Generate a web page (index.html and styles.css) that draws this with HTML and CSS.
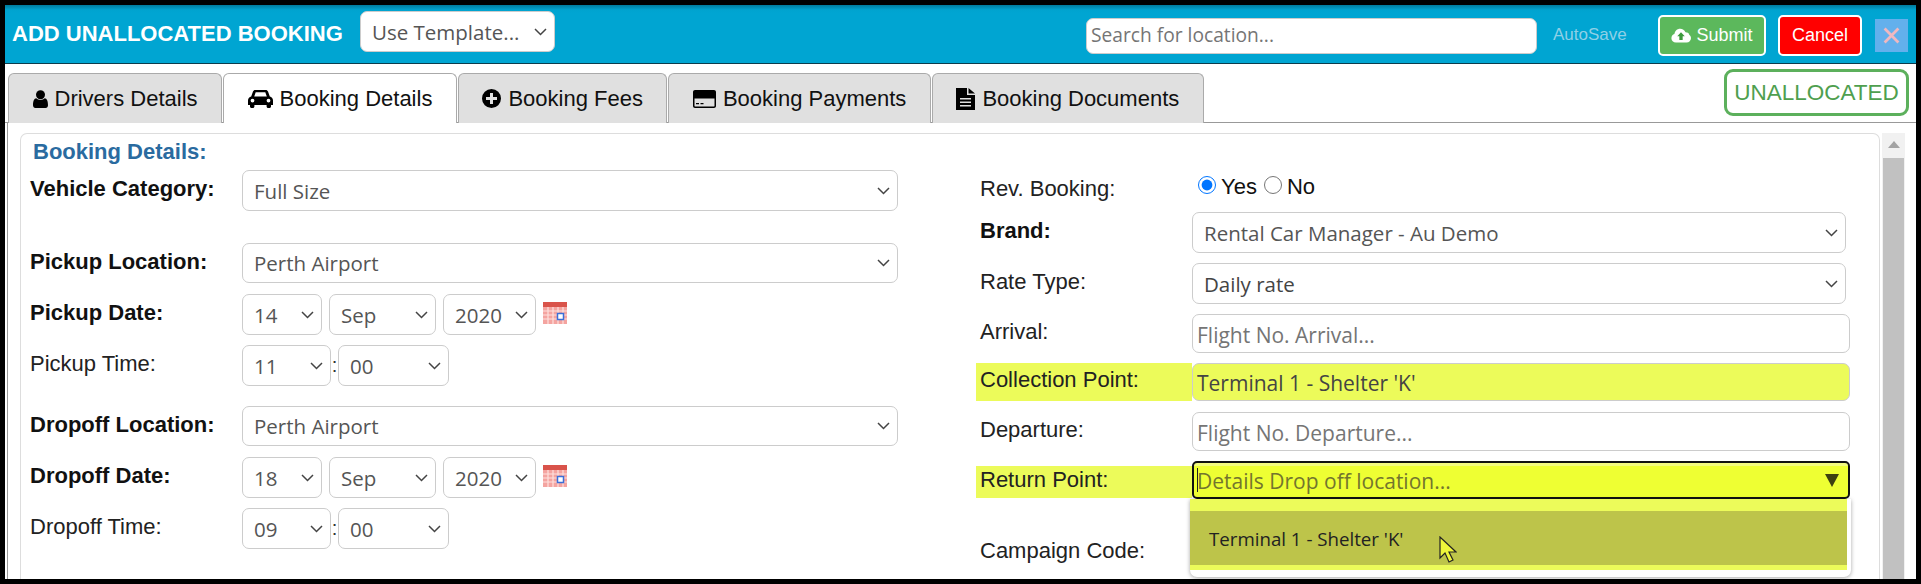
FILE: index.html
```html
<!DOCTYPE html>
<html lang="en">
<head>
<meta charset="utf-8">
<title>Add Unallocated Booking</title>
<link rel="stylesheet" href="styles.css">
</head>
<body>
<div class="frame">
  <header class="topbar">
    <h1 class="title">ADD UNALLOCATED BOOKING</h1>
    <select class="ctl tpl"><option>Use Template...</option></select>
    <input class="search" type="text" placeholder="Search for location...">
    <span class="autosave">AutoSave</span>
    <button class="btn submit" type="button">
      <svg class="cloud" viewBox="0 0 24 18"><path fill="#fff" d="M6 17.500C2.800 17.500.5 15.300.5 12.300c0-2.400 1.400-4.300 3.600-5C4.600 3.700 7.300 1 11 1c2.900 0 5.200 1.500 6.300 4 .9-.2 4.700.4 4.700 3.300 1.200.8 2 2.200 2 3.800 0 3-2.300 5.400-5.300 5.400z"/><path fill="#3d9a3d" d="M12 5l4.500 5H14v4.500h-4V10H7.500z"/></svg>
      Submit
    </button>
    <button class="btn cancel" type="button">Cancel</button>
    <button class="close" type="button" aria-label="Close">
      <svg viewBox="0 0 16 16"><path d="M1.500 1.500l13 13M14.500 1.500l-13 13" stroke="#f0b8c0" stroke-width="2.600" fill="none"/></svg>
    </button>
  </header>

  <nav class="tabbar">
    <a class="tab">
      <svg class="ico i-user" viewBox="0 0 15 18"><circle cx="7.500" cy="4.700" r="4.500"/><path d="M3.300 8.300c1 1 2.600 1.700 4.200 1.700s3.200-.7 4.200-1.700c2.200.2 3.300 3 3.300 7 0 1.600-1 2.700-2.400 2.700H2.400C1 18 0 16.900 0 15.300c0-4 1.100-6.800 3.300-7z"/></svg>
      Drivers Details</a>
    <a class="tab active">
      <svg class="ico i-car" viewBox="0 0 25 18"><path fill-rule="evenodd" d="M7.200 0h10.600c1 0 1.800.6 2.200 1.600L21.800 6.500c1.900.4 3.200 2 3.200 4V15h-2v1.500c0 .9-.7 1.500-1.600 1.500h-1.200c-.9 0-1.600-.6-1.600-1.500V15H6.400v1.500c0 .9-.7 1.500-1.600 1.500H3.600C2.700 18 2 17.400 2 16.500V15H0v-4.500c0-2 1.300-3.600 3.200-4L5 1.600C5.400.6 6.200 0 7.200 0zM7.700 2.300L6.200 6.400h12.600l-1.500-4.100zM4.500 8.700a1.900 1.900 0 1 0 0 3.800 1.900 1.900 0 0 0 0-3.800zm16 0a1.900 1.900 0 1 0 0 3.800 1.900 1.900 0 0 0 0-3.800z"/></svg>
      Booking Details</a>
    <a class="tab">
      <svg class="ico i-plus" viewBox="0 0 19 19"><path fill-rule="evenodd" d="M9.500 0a9.500 9.500 0 1 1 0 19 9.500 9.500 0 0 1 0-19zM8 4v4H4v3h4v4h3v-4h4V8h-4V4z"/></svg>
      Booking Fees</a>
    <a class="tab">
      <svg class="ico i-card" viewBox="0 0 23 18"><path fill-rule="evenodd" d="M2 0h19c1.100 0 2 .9 2 2v14c0 1.100-.9 2-2 2H2c-1.100 0-2-.9-2-2V2C0 .9.900 0 2 0zm-.5 8.500V16c0 .3.200.5.500.5h19c.3 0 .5-.2.500-.5V8.500zM3 13h3v1.200H3zm4.500 0h3v1.200h-3z"/></svg>
      Booking Payments</a>
    <a class="tab">
      <svg class="ico i-file" viewBox="0 0 19 22"><path fill-rule="evenodd" d="M0 0h11v7h8v15H0zM4 10v1.500h11V10zm0 3.500V15h11v-1.500zM4 17v1.500h11V17zM12.500 0L19 5.500h-6.500z"/></svg>
      Booking Documents</a>
    <div class="badge">UNALLOCATED</div>
  </nav>

  <main class="body">
    <section class="panel">
      <h2 class="panel-title">Booking Details:</h2>
      <div class="cols">
        <div class="col-left">
          <div class="row">
            <label class="lbl strong">Vehicle Category:</label>
            <select class="ctl wide"><option>Full Size</option></select>
          </div>
          <div class="row gap-lg h40">
            <label class="lbl strong">Pickup Location:</label>
            <select class="ctl wide"><option>Perth Airport</option></select>
          </div>
          <div class="row gap-sm">
            <label class="lbl strong">Pickup Date:</label>
            <select class="ctl d"><option>14</option></select>
            <select class="ctl m"><option>Sep</option></select>
            <select class="ctl y"><option>2020</option></select>
            <svg class="cal" viewBox="0 0 24 22"><rect width="24" height="22" fill="#f4a4a0"/><rect width="24" height="5" fill="#d9534a"/><path d="M0 9h24M0 13h24M0 17h24M5 5v17M10 5v17M15 5v17M20 5v17" stroke="#fde0dd" stroke-width="1.200"/><rect x="14.500" y="11.500" width="6" height="6" fill="#fff" stroke="#3b6fd8" stroke-width="1.500"/></svg>
          </div>
          <div class="row gap">
            <label class="lbl">Pickup Time:</label>
            <select class="ctl hh"><option>11</option></select><span class="colon">:</span><select class="ctl mm"><option>00</option></select>
          </div>
          <div class="row gap-md h40">
            <label class="lbl strong">Dropoff Location:</label>
            <select class="ctl wide"><option>Perth Airport</option></select>
          </div>
          <div class="row gap-sm">
            <label class="lbl strong">Dropoff Date:</label>
            <select class="ctl d"><option>18</option></select>
            <select class="ctl m"><option>Sep</option></select>
            <select class="ctl y"><option>2020</option></select>
            <svg class="cal" viewBox="0 0 24 22"><rect width="24" height="22" fill="#f4a4a0"/><rect width="24" height="5" fill="#d9534a"/><path d="M0 9h24M0 13h24M0 17h24M5 5v17M10 5v17M15 5v17M20 5v17" stroke="#fde0dd" stroke-width="1.200"/><rect x="14.500" y="11.500" width="6" height="6" fill="#fff" stroke="#3b6fd8" stroke-width="1.500"/></svg>
          </div>
          <div class="row gap">
            <label class="lbl">Dropoff Time:</label>
            <select class="ctl hh"><option>09</option></select><span class="colon">:</span><select class="ctl mm"><option>00</option></select>
          </div>
        </div>

        <div class="col-right">
          <div class="rrow rev">
            <label class="rlbl">Rev. Booking:</label>
            <div class="radios">
              <input type="radio" name="rev" checked><span class="rtxt">Yes</span>
              <input type="radio" name="rev"><span class="rtxt">No</span>
            </div>
          </div>
          <div class="rrow">
            <label class="rlbl strong">Brand:</label>
            <select class="ctl rwide"><option>Rental Car Manager - Au Demo</option></select>
          </div>
          <div class="rrow gap">
            <label class="rlbl">Rate Type:</label>
            <select class="ctl rwide dark"><option>Daily rate</option></select>
          </div>
          <div class="rrow gap h39">
            <label class="rlbl">Arrival:</label>
            <input class="txt" type="text" placeholder="Flight No. Arrival...">
          </div>
          <div class="rrow gap h38">
            <label class="rlbl hl">Collection Point:</label>
            <input class="txt filled" type="text" value="Terminal 1 - Shelter 'K'">
          </div>
          <div class="rrow gap-sm h39">
            <label class="rlbl">Departure:</label>
            <input class="txt" type="text" placeholder="Flight No. Departure...">
          </div>
          <div class="rrow gap h38">
            <label class="rlbl hl hl-short">Return Point:</label>
            <div class="combo">
              <input class="txt focus" type="text" placeholder="Details Drop off location...">
              <i class="caret"></i>
              <i class="tri"></i>
              <div class="menu">
                <div class="menu-fill">
                  <div class="menu-item">Terminal 1 - Shelter 'K'</div>
                </div>
                <svg class="pointer" viewBox="0 0 18 27"><path d="M1 1v21l5-5 4 9 4-2-4-8h7z" fill="#eef53a" stroke="#222" stroke-width="1.200"/></svg>
              </div>
            </div>
          </div>
          <div class="rrow campaign">
            <label class="rlbl">Campaign Code:</label>
          </div>
        </div>
      </div>
    </section>
    <div class="scrollbar">
      <i class="sb-up"></i>
      <div class="sb-thumb"></div>
    </div>
  </main>
</div>
</body>
</html>
```

FILE: styles.css
```css
* { box-sizing: border-box; }
html, body { margin: 0; height: 584px; overflow: hidden; background: #000; }
body { padding: 5px 5px 5px 5px; font-family: "Liberation Sans", Arial, sans-serif; }

.frame { width: 1911px; height: 574px; background: #fff; overflow: hidden; display: flex; flex-direction: column; }

/* header */
.topbar { height: 59px; flex: none; display: flex; align-items: center; padding-left: 7px; border-bottom: 1px solid #0c3c4c;
  background: linear-gradient(#007a9c 0, #00a3cf 5px, #00a5d2 8px); }
.title { margin: 0; font-size: 22px; font-weight: 700; color: #fff; white-space: nowrap; width: 348px; padding-bottom: 1px; }
.tpl { width: 195px; height: 37px; margin-bottom: 5px; background-color: #fff; color: #333; font-size: 21px; }
.search { width: 451px; height: 36px; margin-left: 531px; margin-top: 3px; border: 1px solid #ccc; border-radius: 7px; padding: 0 4px 2px; font: 19.200px "Open Sans", sans-serif; outline: 0; }
.search::placeholder { color: #757575; }
.autosave { margin-left: 16px; width: 105px; font-size: 17px; color: #8fd0e6; margin-top: 1px; }
.btn { height: 41px; border: 2px solid #fff; border-radius: 5px; color: #fff; font: 18px "Liberation Sans", Arial, sans-serif; padding: 0; display: flex; align-items: center; justify-content: center; margin-top: 2px; }
.submit { width: 108px; background: #5cb85c; gap: 5px; }
.cloud { width: 20px; height: 15px; }
.cancel { width: 84px; background: #f00; margin-left: 12px; }
.close { width: 33px; height: 33px; margin-left: 13px; margin-top: 2px; padding: 8px; border: 0; background: #63b0ec; display: flex; }
.close svg { width: 17px; height: 17px; }

/* tabs */
.tabbar { height: 59px; flex: none; display: flex; align-items: flex-start; padding: 5px 7px 0 3px; gap: 1px; border-bottom: 1px solid #999; }
.tab { height: 50px; margin-top: 4px; padding: 0 23.500px; display: flex; align-items: center; gap: 7px; background: #e0e0e0; border: 1px solid #aaa; border-bottom: 0; border-radius: 6px 6px 0 0; font-size: 22px; color: #111; white-space: nowrap; }
.tab.active { background: #fff; }
.ico { fill: #000; flex: none; }
.i-user { width: 15px; height: 18px; }
.i-car { width: 25px; height: 18px; }
.i-plus { width: 19px; height: 19px; }
.i-card { width: 23px; height: 18px; }
.i-file { width: 19px; height: 22px; }
.badge { margin-left: auto; width: 185px; height: 47px; border: 3px solid #5cb05c; border-radius: 9px; color: #4f9f4f; font-size: 22.500px; display: flex; align-items: center; justify-content: center; }

/* body */
.body { flex: 1; min-height: 0; display: flex; align-items: stretch; margin-left: 2px; border-left: 1px solid #999; padding: 10px 11px 0 12px; }
.panel { flex: none; width: 1860px; border: 1px solid #ddd; border-bottom: 0; border-radius: 7px 7px 0 0; padding: 0 10px; }
.panel-title { margin: 0; height: 36px; padding-left: 2px; display: flex; align-items: center; font-size: 22px; font-weight: 700; color: #2a6ba0; }
.cols { display: flex; gap: 77px; }
.col-left { width: 867px; flex: none; }
.col-right { flex: 1; padding-top: 2px; margin-left: -1px; }

/* controls */
.ctl { appearance: none; height: 41px; border: 1px solid #ccc; border-radius: 7px; padding: 0 22px 0 11px; font: 20.500px "Open Sans", sans-serif; color: #555; background-color: #fff;
  background-image: url("data:image/svg+xml,%3Csvg xmlns='http://www.w3.org/2000/svg' width='13' height='8'%3E%3Cpath d='M1 1l5.500 5.500L12 1' fill='none' stroke='%23444' stroke-width='1.500'/%3E%3C/svg%3E");
  background-repeat: no-repeat; background-position: right 7px center; }
.dark { color: #444; }
.wide { width: 656px; }
.rwide { width: 654px; }
.d { width: 80px; }
.m { width: 107px; }
.y { width: 93px; }
.hh { width: 89px; }
.mm { width: 111px; }
.row { display: flex; align-items: center; height: 41px; }
.row .d, .row .m, .row .y { margin-right: 7px; }
.h40, .h40 .ctl { height: 40px; }
.gap { margin-top: 10px; }
.gap-sm { margin-top: 11px; }
.gap-md { margin-top: 20px; }
.gap-lg { margin-top: 32px; }
.lbl { width: 211px; flex: none; font-size: 22px; color: #222; padding-bottom: 3px; white-space: nowrap; margin-left: -1px; margin-right: 1px; }
.strong { font-weight: 700; color: #111; }
.colon { width: 7px; font-size: 20px; color: #333; text-align: center; }
.cal { width: 24px; height: 22px; margin-bottom: 4px; }

/* right column */
.rrow { display: flex; height: 41px; align-items: center; }
.rev { height: 30px; margin-bottom: 10px; }
.rlbl { width: 218px; flex: none; padding-left: 6px; font-size: 22px; color: #222; white-space: nowrap; }
.rlbl.strong { color: #111; padding-bottom: 5px; }
.rrow .rlbl { padding-bottom: 4px; }
.rev .rlbl { padding: 3px 0 0 6px; }
.radios { display: flex; align-items: center; margin-left: 6px; margin-bottom: 4px; }
.radios input { width: 18px; height: 18px; margin: 0 5px 0 0; accent-color: #0075ff; }
.rtxt { font-size: 22px; color: #111; margin: 3px 7px 0 0; }
.h39 { height: 39px; }
.h38 { height: 38px; }
.txt { width: 658px; height: 100%; border: 1px solid #ccc; border-radius: 7px; padding: 2px 4px 0; font: 21px "Open Sans", sans-serif; color: #444; background: #fff; outline: 0; }
.txt::placeholder { color: #757575; }
.filled { background: #ecfb5a; color: #444; }
.hl { background: #ecfb5a; align-self: stretch; display: flex; align-items: center; margin-left: 2px; width: 216px; padding-left: 4px; }
.hl-short { margin-top: 5px; margin-bottom: 1px; }
.combo { position: relative; width: 658px; height: 100%; }
.focus { border: 2px solid #111; border-radius: 5px; background: linear-gradient(#f3fb80 0, #f3fb80 3px, #eeff33 3px); padding-left: 3px; }
.focus::placeholder { color: #73752e; }
.caret { position: absolute; left: 5px; top: 7px; width: 1px; height: 24px; background: #222; }
.tri { position: absolute; right: 11px; top: 13px; border-left: 7.500px solid transparent; border-right: 7.500px solid transparent; border-top: 13px solid #3d4010; }
.menu { position: absolute; left: -2px; top: 38px; width: 661px; height: 78px; background: #fff; border-radius: 0 0 7px 7px; box-shadow: 0 1px 4px rgba(0,0,0,.35); padding-right: 4px; }
.menu-fill { height: 71px; padding-top: 12px; background: #ecfb5a; }
.menu-item { height: 54px; background: #bdc44a; padding-left: 19px; display: flex; align-items: center; font: 18.700px "Open Sans", sans-serif; color: #222; }
.pointer { position: absolute; left: 249px; top: 37px; width: 18px; height: 27px; }
.campaign { margin-top: 39px; height: 30px; }

/* scrollbar */
.scrollbar { width: 23px; flex: none; margin-left: 2px; background: #f1f1f1; display: flex; flex-direction: column; align-items: center; }
.sb-up { margin-top: 8px; border-left: 6px solid transparent; border-right: 6px solid transparent; border-bottom: 7px solid #a3a3a3; width: 0; height: 0; box-sizing: content-box; margin-bottom: 10px; }
.sb-thumb { flex: 1; width: 21px; background: #c1c1c1; }
```
